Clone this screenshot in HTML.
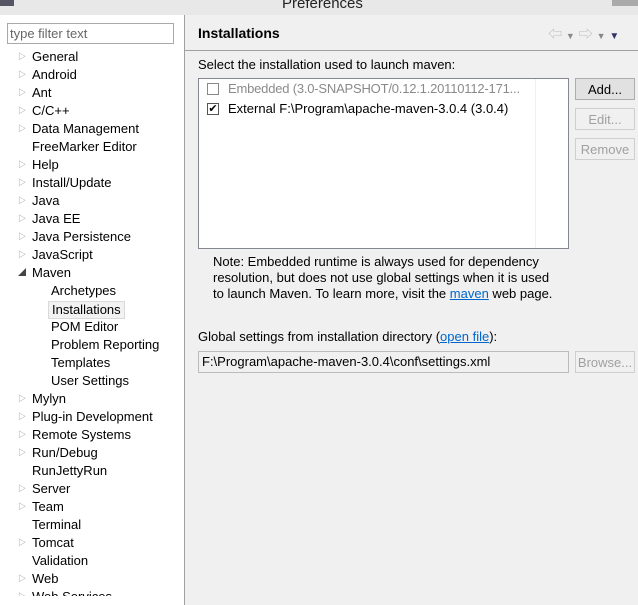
<!DOCTYPE html><html><head><style>
body{margin:0;width:638px;height:596px;overflow:hidden;background:#f0f0f0;font-family:"Liberation Sans","Noto Sans CJK SC",sans-serif;font-size:13px;color:#000;position:relative}
.a{position:absolute;white-space:nowrap}
#title{left:0;top:0;width:638px;height:15px;background:#e8e8e8;overflow:hidden}
#left{left:0;top:15px;width:184px;height:590px;background:#fff;border-right:1px solid #a0a0a0}
.row{position:absolute;left:32px;height:18px;line-height:18px}
.tri{position:absolute;left:-14px;top:0;font-size:8px;color:#888}
.btn{position:absolute;left:575px;width:60px;height:22px;border:1px solid #adadad;background:#e1e1e1;text-align:center;line-height:22px;box-sizing:border-box}
.dis{color:#a0a0a0;border-color:#cfcfcf;background:#f0f0f0}
a{color:#0066cc;text-decoration:underline}
</style></head><body>
<div class="a" id="title"><div class="a" style="left:282px;top:-5px;font-size:15px;color:#222">Preferences</div><div class="a" style="left:0;top:0;width:14px;height:6px;background:#556"></div><div class="a" style="left:612px;top:0;width:26px;height:6px;background:#aaa"></div></div>
<div class="a" id="left">
<div class="a" style="left:7px;top:8px;border:1px solid #a9a9a9;color:#666;line-height:19px;padding-left:2px;box-sizing:border-box;width:167px;height:21px">type filter text</div>
</div>
<div class="a" style="left:0;top:15px;width:184px;height:581px;overflow:hidden">
<div class="row" style="top:33px"><span class="tri">▷</span>General</div>
<div class="row" style="top:51px"><span class="tri">▷</span>Android</div>
<div class="row" style="top:69px"><span class="tri">▷</span>Ant</div>
<div class="row" style="top:87px"><span class="tri">▷</span>C/C++</div>
<div class="row" style="top:105px"><span class="tri">▷</span>Data Management</div>
<div class="row" style="top:123px">FreeMarker Editor</div>
<div class="row" style="top:141px"><span class="tri">▷</span>Help</div>
<div class="row" style="top:159px"><span class="tri">▷</span>Install/Update</div>
<div class="row" style="top:177px"><span class="tri">▷</span>Java</div>
<div class="row" style="top:195px"><span class="tri">▷</span>Java EE</div>
<div class="row" style="top:213px"><span class="tri">▷</span>Java Persistence</div>
<div class="row" style="top:231px"><span class="tri">▷</span>JavaScript</div>
<div class="row" style="top:249px"><span class="tri" style="color:#444">◢</span>Maven</div>
<div class="row" style="top:267px;left:51px">Archetypes</div>
<div class="row" style="left:48px;padding:0 3px;background:#f2f2f2;border:1px solid #dadada;height:16px;line-height:16px;top:286px">Installations</div>
<div class="row" style="top:303px;left:51px">POM Editor</div>
<div class="row" style="top:321px;left:51px">Problem Reporting</div>
<div class="row" style="top:339px;left:51px">Templates</div>
<div class="row" style="top:357px;left:51px">User Settings</div>
<div class="row" style="top:375px"><span class="tri">▷</span>Mylyn</div>
<div class="row" style="top:393px"><span class="tri">▷</span>Plug-in Development</div>
<div class="row" style="top:411px"><span class="tri">▷</span>Remote Systems</div>
<div class="row" style="top:429px"><span class="tri">▷</span>Run/Debug</div>
<div class="row" style="top:447px">RunJettyRun</div>
<div class="row" style="top:465px"><span class="tri">▷</span>Server</div>
<div class="row" style="top:483px"><span class="tri">▷</span>Team</div>
<div class="row" style="top:501px">Terminal</div>
<div class="row" style="top:519px"><span class="tri">▷</span>Tomcat</div>
<div class="row" style="top:537px">Validation</div>
<div class="row" style="top:555px"><span class="tri">▷</span>Web</div>
<div class="row" style="top:573px"><span class="tri">▷</span>Web Services</div>
</div>
<div class="a" style="left:198px;top:25px;font-size:14px;font-weight:bold">Installations</div>
<div class="a" style="left:548px;top:24px;font-size:14px;color:#bbb">⇦ <span style="font-size:9px;color:#888">▼</span> ⇨ <span style="font-size:9px;color:#888">▼</span> <span style="font-size:10px;color:#33336a">▼</span></div>
<div class="a" style="left:185px;top:50px;width:453px;height:1px;background:#a0a0a0"></div>
<div class="a" style="left:198px;top:57px">Select the installation used to launch maven:</div>
<div class="a" style="left:198px;top:78px;width:371px;height:171px;background:#fff;border:1px solid #828790;box-sizing:border-box">
<div class="a" style="left:336px;top:0;width:1px;height:169px;background:#eef"></div>
<div class="a" style="left:8px;top:4px;width:12px;height:12px;border:1px solid #888;box-sizing:border-box"></div>
<div class="a" style="left:29px;top:2px;color:#8a8a8a;letter-spacing:-0.2px">Embedded (3.0-SNAPSHOT/0.12.1.20110112-171...</div>
<div class="a" style="left:8px;top:24px;width:12px;height:12px;border:1px solid #555;box-sizing:border-box;font-size:11px;line-height:10px;text-align:center">✔</div>
<div class="a" style="left:29px;top:22px">External F:\Program\apache-maven-3.0.4 (3.0.4)</div>
</div>
<div class="btn" style="top:78px">Add...</div>
<div class="btn dis" style="top:108px">Edit...</div>
<div class="btn dis" style="top:138px">Remove</div>
<div class="a" style="left:213px;top:254px;line-height:16px">Note: Embedded runtime is always used for dependency<br>resolution, but does not use global settings when it is used<br>to launch Maven. To learn more, visit the <a>maven</a> web page.</div>
<div class="a" style="left:198px;top:329px">Global settings from installation directory (<a>open file</a>):</div>
<div class="a" style="left:198px;top:351px;width:371px;height:22px;border:1px solid #bbb;box-sizing:border-box;background:#f0f0f0;line-height:20px;padding-left:3px">F:\Program\apache-maven-3.0.4\conf\settings.xml</div>
<div class="btn dis" style="top:351px">Browse...</div>
</body></html>
